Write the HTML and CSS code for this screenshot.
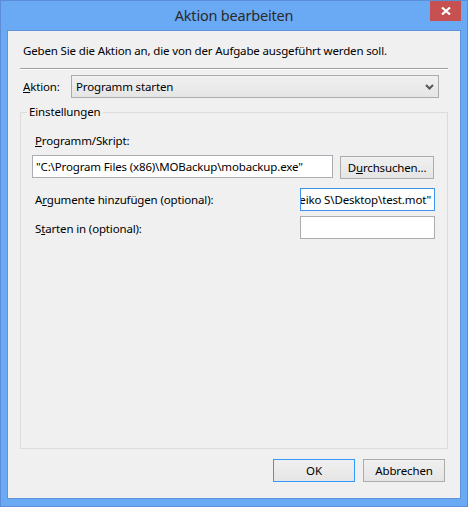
FILE: index.html
```html
<!DOCTYPE html>
<html lang="de">
<head>
<meta charset="utf-8">
<title>Aktion bearbeiten</title>
<link rel="stylesheet" href="styles.css">
</head>
<body>
<div class="window">
  <div class="titlebar">
    <span class="title">Aktion bearbeiten</span>
    <div class="close">
      <svg width="10" height="8" viewBox="0 0 10 8"><path d="M1 0.5 L9 7.5 M9 0.5 L1 7.5" stroke="#fff" stroke-width="2.2" fill="none"/></svg>
    </div>
  </div>
  <div class="client">
    <div class="intro">Geben Sie die Aktion an, die von der Aufgabe ausgeführt werden soll.</div>
    <div class="sep"></div>
    <div class="action-row">
      <span class="action-label"><u>A</u>ktion:</span>
      <div class="combo">
        <span class="combo-text">Programm starten</span>
        <svg class="chev" width="9" height="6" viewBox="0 0 9 6"><path d="M1 1 L4.5 4.5 L8 1" stroke="#555" stroke-width="2" fill="none"/></svg>
      </div>
    </div>
    <div class="group">
      <span class="legend">Einstellungen</span>
      <div class="lbl-prog"><u>P</u>rogramm/Skript:</div>
      <div class="row1">
        <div class="tb tb-prog">"C:\Program Files (x86)\MOBackup\mobackup.exe"</div>
        <div class="btn btn-browse">D<u>u</u>rchsuchen...</div>
      </div>
      <div class="row2">
        <span class="lbl">A<u>r</u>gumente hinzufügen (optional):</span>
        <div class="tb tb-small focus"><span class="tb-scroll">"C:\Users\Heiko S\Desktop\test.mot"</span></div>
      </div>
      <div class="row3">
        <span class="lbl lbl-start">S<u>t</u>arten in (optional):</span>
        <div class="tb tb-small"></div>
      </div>
    </div>
    <div class="buttons">
      <div class="btn btn-ok">OK</div>
      <div class="btn">Abbrechen</div>
    </div>
  </div>
</div>
</body>
</html>
```

FILE: styles.css
```css
html, body {
  margin: 0;
  padding: 0;
}
body {
  font-family: "Noto Sans", "Open Sans", sans-serif;
  font-size: 11.5px;
  letter-spacing: -0.15px;
  color: #000;
}
.window {
  position: relative;
  width: 468px;
  height: 507px;
  box-sizing: border-box;
  background: #6aa9f4;
  border: 1px solid #5b8ed6;
  padding: 0 6px 7px 6px;
  display: flex;
  flex-direction: column;
}
.titlebar {
  height: 29px;
  flex: none;
  display: flex;
  align-items: center;
  justify-content: center;
}
.title {
  font-size: 14.5px;
  letter-spacing: -0.2px;
  color: #2b2b2b;
  margin-top: -2px;
  margin-left: 0;
}
.close {
  position: absolute;
  top: 0;
  right: 6px;
  width: 31px;
  height: 20px;
  background: #c75050;
  display: flex;
  align-items: center;
  justify-content: center;
}
.close svg {
  display: block;
  margin-left: 1px;
}
.client {
  flex: 1;
  background: #f0f0f0;
  border: 1px solid #5e93dc;
  display: flex;
  flex-direction: column;
  line-height: 16px;
}
.intro {
  margin: 12px 0 0 15px;
  height: 16px;
  white-space: nowrap;
}
.sep {
  margin: 9px 12px 0 12px;
  height: 0;
  border-top: 1px solid #a0a0a0;
  border-bottom: 1px solid #ffffff;
}
.action-row {
  margin: 5px 21px 0 15px;
  display: flex;
  align-items: center;
  height: 23px;
}
.action-label {
  width: 48px;
  flex: none;
}
.combo {
  flex: 1;
  height: 23px;
  box-sizing: border-box;
  border: 1px solid #acacac;
  background: linear-gradient(#f0f0f0, #e5e5e5);
  display: flex;
  align-items: center;
  padding: 0 4px 0 4px;
}
.combo-text {
  flex: 1;
}
.chev {
  display: block;
  margin-right: 0;
}
.group {
  position: relative;
  margin: 14px 12px 0 12px;
  height: 337px;
  box-sizing: border-box;
  border: 1px solid #dcdcdc;
  padding: 20px 12px 0 11px;
}
.legend {
  position: absolute;
  top: -9px;
  left: 6px;
  padding: 0 3px 0 2px;
  background: #f0f0f0;
}
.lbl-prog {
  padding-left: 3px;
  height: 16px;
}
.row1 {
  margin-top: 6px;
  display: flex;
  align-items: flex-start;
  gap: 7px;
}
.tb {
  box-sizing: border-box;
  height: 23px;
  border: 1px solid #abadb3;
  background: #fff;
  display: flex;
  align-items: center;
  white-space: nowrap;
  overflow: hidden;
}
.tb-prog {
  width: 301px;
  padding-left: 3px;
}
.btn {
  box-sizing: border-box;
  height: 23px;
  border: 1px solid #acacac;
  background: linear-gradient(#f0f0f0, #e5e5e5);
  display: flex;
  align-items: center;
  justify-content: center;
  white-space: nowrap;
}
.btn-browse {
  width: 94px;
  margin-top: 1px;
}
.row2 {
  margin-top: 9px;
  display: flex;
  align-items: center;
  justify-content: space-between;
}
.row3 {
  margin-top: 5px;
  display: flex;
  align-items: center;
  justify-content: space-between;
}
.lbl {
  padding-left: 3px;
}
.lbl-start {
  margin-top: 3px;
}
.tb-small {
  width: 135px;
  justify-content: flex-end;
  padding-right: 3px;
}
.focus {
  border-color: #3d95ee;
}
.tb-scroll {
  flex: none;
}
.buttons {
  margin: 10px 15px 0 0;
  display: flex;
  justify-content: flex-end;
  gap: 8px;
}
.buttons .btn {
  width: 82px;
}
.btn-ok {
  border-color: #3399ff;
}
```
